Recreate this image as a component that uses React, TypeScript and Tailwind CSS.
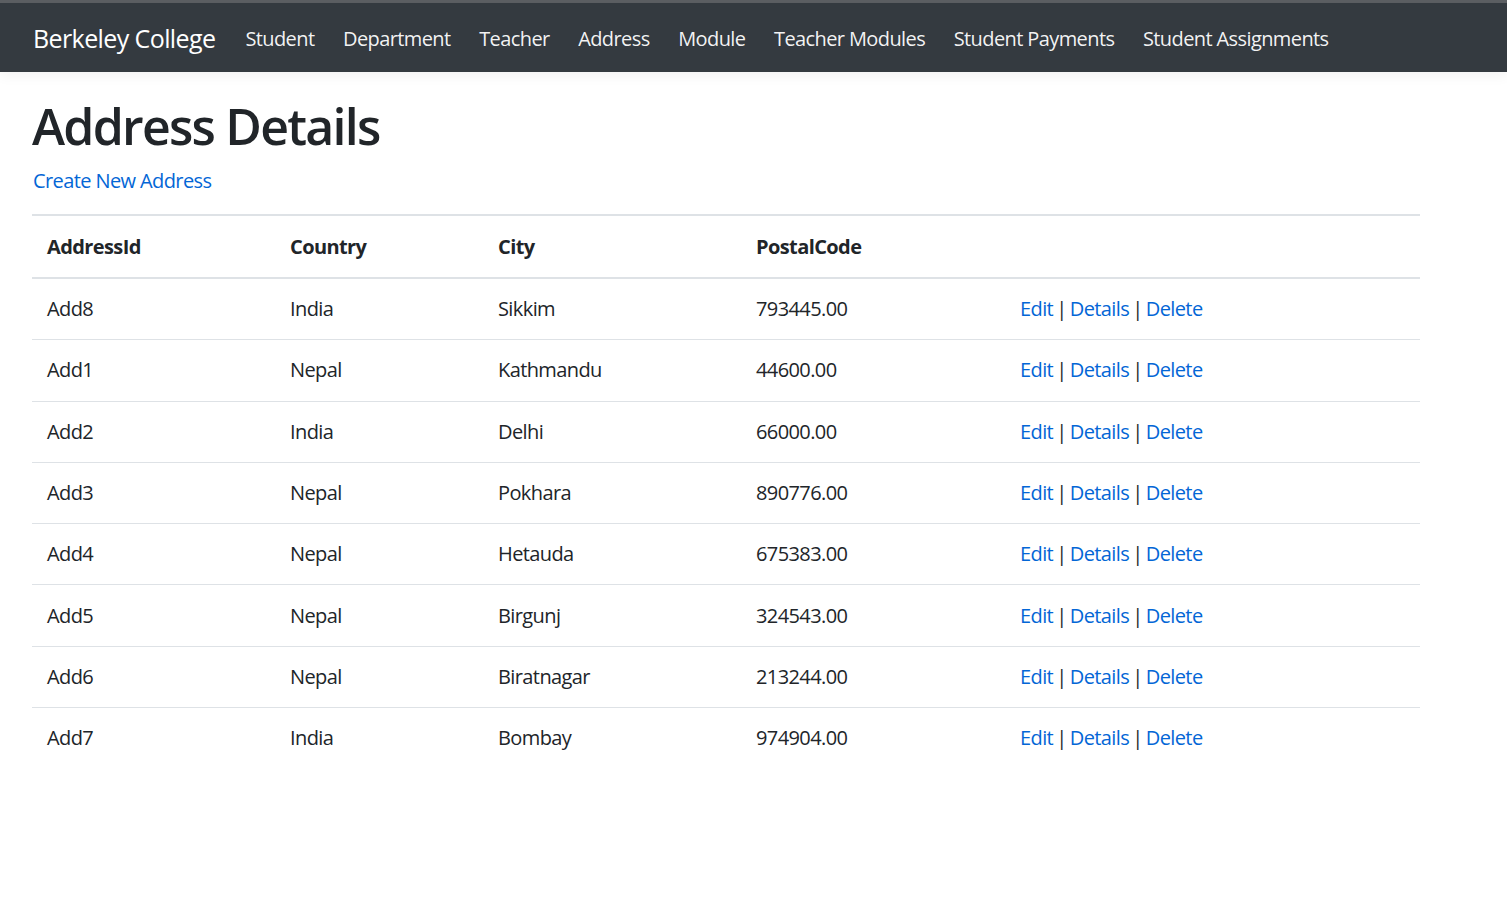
const navLinks = [
  "Student",
  "Department",
  "Teacher",
  "Address",
  "Module",
  "Teacher Modules",
  "Student Payments",
  "Student Assignments",
]

type Address = {
  id: string
  country: string
  city: string
  postal: string
}

const addresses: Address[] = [
  { id: "Add8", country: "India", city: "Sikkim", postal: "793445.00" },
  { id: "Add1", country: "Nepal", city: "Kathmandu", postal: "44600.00" },
  { id: "Add2", country: "India", city: "Delhi", postal: "66000.00" },
  { id: "Add3", country: "Nepal", city: "Pokhara", postal: "890776.00" },
  { id: "Add4", country: "Nepal", city: "Hetauda", postal: "675383.00" },
  { id: "Add5", country: "Nepal", city: "Birgunj", postal: "324543.00" },
  { id: "Add6", country: "Nepal", city: "Biratnagar", postal: "213244.00" },
  { id: "Add7", country: "India", city: "Bombay", postal: "974904.00" },
]

function App() {
  return (
    <div className="min-h-screen bg-white text-[#212529] text-[20px] tracking-[-0.03em] font-['Open_Sans','Noto_Sans',sans-serif]">
      <div className="h-[3px] bg-[#5c5f63]"></div>
      <nav className="h-[69px] bg-[#343a40] flex items-center px-[33px] pt-[2px] shadow-[0_4px_12px_rgba(0,0,0,0.05)]">
        <a className="text-white text-[25px] mr-[30px]">Berkeley College</a>
        <ul className="flex flex-row gap-[28.6px]">
          {navLinks.map((l) => (
            <li key={l}>
              <a className="text-white/95">{l}</a>
            </li>
          ))}
        </ul>
      </nav>

      <main className="px-[32px] pr-[87px] pt-[24px]">
        <h1 className="text-[50px] leading-[1.2] font-semibold tracking-[-0.035em] mb-[10px]">Address Details</h1>
        <p className="mb-[18px] leading-[30px] pl-[1px]">
          <a className="text-[#0366d6]">Create New Address</a>
        </p>

        <table className="w-full table-fixed border-collapse">
          <colgroup>
            <col className="w-[243px]" />
            <col className="w-[208px]" />
            <col className="w-[258px]" />
            <col className="w-[264px]" />
            <col />
          </colgroup>
          <thead>
            <tr className="border-t-2 border-b-2 border-[#dee2e6]">
              <th className="text-left font-bold px-[15px] pt-[16px] pb-[15px] leading-[30px]">AddressId</th>
              <th className="text-left font-bold px-[15px] pt-[16px] pb-[15px] leading-[30px]">Country</th>
              <th className="text-left font-bold px-[15px] pt-[16px] pb-[15px] leading-[30px]">City</th>
              <th className="text-left font-bold px-[15px] pt-[16px] pb-[15px] leading-[30px]">PostalCode</th>
              <th></th>
            </tr>
          </thead>
          <tbody>
            {addresses.map((a, i) => (
              <tr key={a.id} className={i === 0 ? "" : "border-t border-[#dee2e6]"}>
                <td className="px-[15px] py-[15.15px] leading-[30px]">{a.id}</td>
                <td className="px-[15px] py-[15.15px] leading-[30px]">{a.country}</td>
                <td className="px-[15px] py-[15.15px] leading-[30px]">{a.city}</td>
                <td className="px-[15px] py-[15.15px] leading-[30px]">{a.postal}</td>
                <td className="px-[15px] py-[15.15px] leading-[30px] [word-spacing:-1.5px]">
                  <a className="text-[#0366d6]">Edit</a> | <a className="text-[#0366d6]">Details</a> |{" "}
                  <a className="text-[#0366d6]">Delete</a>
                </td>
              </tr>
            ))}
          </tbody>
        </table>
      </main>
    </div>
  )
}

export default App
